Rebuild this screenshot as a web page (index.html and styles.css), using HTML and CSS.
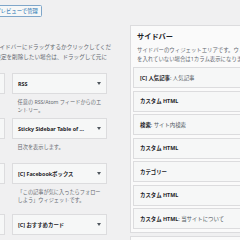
FILE: index.html
```html
<!DOCTYPE html>
<html lang="ja">
<head>
<meta charset="utf-8">
<title>ウィジェット</title>
<link rel="stylesheet" href="styles.css">
</head>
<body>
<div class="page">
  <header class="top">
    <h1>ウィジェット</h1>
    <a class="btn">ライブプレビューで管理</a>
  </header>
  <div class="columns">
    <section class="left">
      <h2>利用できるウィジェット</h2>
      <p class="intro">ウィジェットを有効化するには、サイドバーにドラッグするかクリックしてくだ<br>さい。ウィジェットを無効化し設定を削除したい場合は、ドラッグして元に</p>
      <div class="list">
        <div class="item"><div class="bar"><span>アーカイブ</span><i class="arrow"></i></div></div>
        <div class="item"><div class="bar"><span>RSS</span><i class="arrow"></i></div><p>任意の RSS/Atom フィードからのエ<br>ントリー。</p></div>
        <div class="item"><div class="bar"><span>カレンダー</span><i class="arrow"></i></div></div>
        <div class="item"><div class="bar"><span>Sticky Sidebar Table of ...</span><i class="arrow"></i></div><p>目次を表示します。</p></div>
        <div class="item"><div class="bar"><span>[C] 新着記事</span><i class="arrow"></i></div></div>
        <div class="item"><div class="bar"><span>[C] Facebookボックス</span><i class="arrow"></i></div><p>「この記事が気に入ったらフォロー<br>しよう」ウィジェットです。</p></div>
        <div class="item"><div class="bar"><span>[C] プロフィール</span><i class="arrow"></i></div></div>
        <div class="item"><div class="bar"><span>[C] おすすめカード</span><i class="arrow"></i></div><p>おすすめカードを表示します。</p></div>
      </div>
    </section>
    <section class="right">
      <div class="panel">
        <h3>サイドバー</h3>
        <p class="desc">サイドバーのウィジェットエリアです。ウィジェット<br>を入れていない場合は1カラム表示になります。</p>
        <div class="wlist">
          <div class="w">[C] 人気記事<span class="sub">: 人気記事</span></div>
          <div class="w">カスタム HTML</div>
          <div class="w">検索<span class="sub">: サイト内検索</span></div>
          <div class="w">カスタム HTML</div>
          <div class="w">カテゴリー</div>
          <div class="w">カスタム HTML</div>
          <div class="w">カスタム HTML<span class="sub">: 当サイトについて</span></div>
        </div>
      </div>
      <div class="panel next"></div>
    </section>
  </div>
</div>
</body>
</html>
```
FILE: styles.css
```css
* { box-sizing: border-box; margin: 0; padding: 0; }
html, body { width: 240px; height: 240px; overflow: hidden; background: #f0f0f1; }
body { font-family: "Noto Sans", "Noto Sans CJK JP", sans-serif; color: #1d2327; }

.page { margin-left: -90px; width: 420px; }

.top { display: flex; align-items: center; justify-content: space-between; width: 132px; padding-top: 5px; }
.top h1 { font-size: 8px; font-weight: 400; line-height: 12px; }
.btn { display: block; height: 12px; padding: 0 3px; border: 1px solid #7fa6c9; border-radius: 1.5px; color: #2271b1; background: #f6f7f7; font-size: 5.4px; line-height: 10px; white-space: nowrap; }

.columns { display: flex; align-items: flex-start; gap: 23px; }

.left { width: 197px; flex: none; }
.left h2 { font-size: 7px; line-height: 10px; margin-top: 10px; font-weight: 600; }
.intro { margin-top: 5px; font-size: 5.6px; line-height: 10px; color: #646970; text-align: right; white-space: nowrap; }

.list { margin-top: 11px; display: grid; grid-template-columns: 95px 95px; column-gap: 7px; grid-template-rows: 45px 45px 51px auto; }
.bar { height: 21px; display: flex; align-items: center; justify-content: space-between; padding: 0 5.5px 0 5px; border: 1px solid #dcdcde; background: #f6f7f7; font-size: 5.4px; font-weight: 700; white-space: nowrap; }
.arrow { width: 0; height: 0; border-left: 2.5px solid transparent; border-right: 2.5px solid transparent; border-top: 3px solid #50575e; }
.item p { margin-top: 4px; padding-left: 5.5px; font-size: 5.2px; line-height: 8px; color: #646970; white-space: nowrap; }

.right { flex: none; width: 200px; }
.panel { margin-top: 8px; border: 1px solid #dcdcde; background: #fafafa; padding: 0 3px 3px 2px; }
.panel h3 { font-size: 7.2px; line-height: 10px; padding: 5px 0 0 4px; font-weight: 700; }
.desc { margin-top: 4.5px; padding-left: 4px; font-size: 5.4px; line-height: 9px; color: #646970; white-space: nowrap; }
.wlist { margin-top: 3.5px; display: flex; flex-direction: column; gap: 2.5px; }
.w { height: 21px; display: flex; align-items: center; padding-left: 6px; border: 1px solid #dcdcde; background: #f6f7f7; font-size: 5.4px; font-weight: 700; white-space: nowrap; }
.sub { font-weight: 400; color: #50575e; }
.panel.next { margin-top: 3px; height: 20px; }
```
